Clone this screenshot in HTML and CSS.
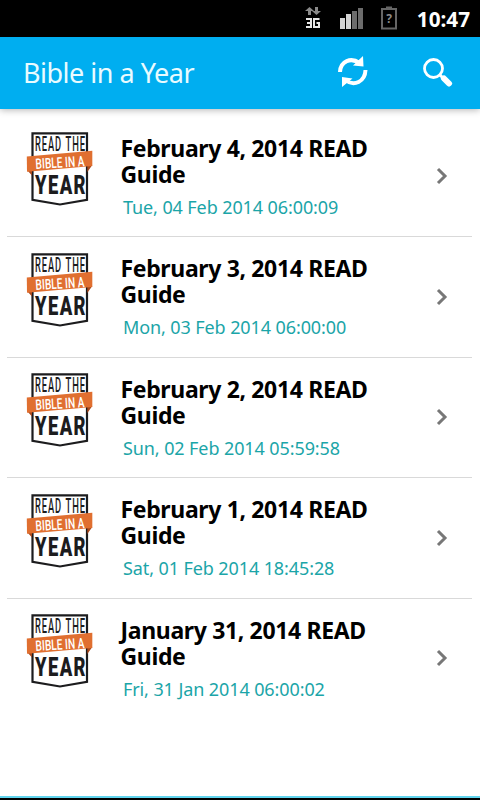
FILE: index.html
```html
<!DOCTYPE html>
<html lang="en">
  <head>
    <meta charset="utf-8">
    <meta name="viewport" content="width=device-width" />
    <title>Bible in a Year</title>
    <link rel="stylesheet" href="styles.css">
  </head>
  <body>
    <svg class="defs" width="0" height="0">
      <symbol id="badge" viewBox="0 0 68 76">
        <path d="M6.500 2.300H61v66.500L34 73.500 6.500 68.800z" fill="#fff" stroke="#1c1c1e" stroke-width="2.200"/>
        <path d="M1 39l5 5.500V39zM66.300 34l-5 7v-7z" fill="#a8481c"/>
        <path d="M.800 25.500L66.300 19.800V35L1 40.700z" fill="#e06f30"/>
        <g font-family="Roboto, sans-serif" fill="#1c1c1e">
          <text class="spaced" x="9" y="20" font-size="20.500" font-weight="500" textLength="27" lengthAdjust="spacingAndGlyphs">READ</text>
          <text class="spaced" x="39.500" y="20" font-size="20.500" font-weight="500" textLength="20.500" lengthAdjust="spacingAndGlyphs">THE</text>
          <text x="9.500" y="36.500" font-size="14.500" font-weight="500" fill="#fff" textLength="49" lengthAdjust="spacingAndGlyphs" transform="rotate(-3.500 34 32)">BIBLE IN A</text>
          <text class="spaced" x="9" y="63" font-size="26" font-weight="900" textLength="52" lengthAdjust="spacingAndGlyphs">YEAR</text>
        </g>
      </symbol>
      <symbol id="chevron" viewBox="0 0 12 18">
        <path d="M2 2l7 7-7 7" fill="none" stroke="#777" stroke-width="3"/>
      </symbol>
    </svg>

    <div class="status-bar">
      <svg class="network" width="16" height="22" viewBox="0 0 16 22">
        <path d="M4.500 0L0 4h3v4h3V4h3zM11.500 8L7 4h3V0h3v4h3z" fill="#8a8a8a"/>
        <path d="M1 12h5v8H1M2 16h4M14.500 12H9v8h5v-4h-2.500" fill="none" stroke="#e8e8e8" stroke-width="2"/>
      </svg>
      <svg class="signal" width="24" height="22" viewBox="0 0 24 22">
        <path d="M0 10h5v11H0zM6 6h5v15H6z" fill="#d4d4d4"/>
        <path d="M12 3h5v18h-5zM18 0h5v21h-5z" fill="#6c6c6c"/>
      </svg>
      <svg class="battery" width="16" height="24" viewBox="0 0 16 24">
        <path d="M1 3h14v19.500H1zM5 1.500h6" fill="none" stroke="#666" stroke-width="2"/>
        <text x="8" y="17" text-anchor="middle" font-size="12" font-weight="700" fill="#8a8a8a">?</text>
      </svg>
      <span class="clock">10:47</span>
    </div>

    <header class="header">
      <h1>Bible in a Year</h1>
      <svg class="refresh" width="30" height="32" viewBox="0 0 30 32">
        <path d="M2 16C2.500 5 13 1 21.500 7M27.500 14C27 26 16 30.500 8 24.500" fill="none" stroke="#fff" stroke-width="4"/>
        <path d="M25 0l.500 10.500L15 9.500zM4 31l0-10 10.500 1.500z" fill="#fff"/>
      </svg>
      <svg class="search" width="30" height="30" viewBox="0 0 30 30">
        <circle cx="10.500" cy="10.500" r="9" fill="none" stroke="#fff" stroke-width="2.800"/>
        <path d="M17 17l3 3" stroke="#fff" stroke-width="3"/>
        <path d="M21 20.500l5 5" stroke="#fff" stroke-width="6" stroke-linecap="round"/>
      </svg>
    </header>

    <main class="guides">
      <a class="guide">
        <svg class="badge"><use href="#badge"/></svg>
        <div class="text">
          <h2>February 4, 2014 READ<br>Guide</h2>
          <p>Tue, 04 Feb 2014 06:00:09</p>
        </div>
        <svg class="chevron"><use href="#chevron"/></svg>
      </a>
      <a class="guide">
        <svg class="badge"><use href="#badge"/></svg>
        <div class="text">
          <h2>February 3, 2014 READ<br>Guide</h2>
          <p>Mon, 03 Feb 2014 06:00:00</p>
        </div>
        <svg class="chevron"><use href="#chevron"/></svg>
      </a>
      <a class="guide">
        <svg class="badge"><use href="#badge"/></svg>
        <div class="text">
          <h2>February 2, 2014 READ<br>Guide</h2>
          <p>Sun, 02 Feb 2014 05:59:58</p>
        </div>
        <svg class="chevron"><use href="#chevron"/></svg>
      </a>
      <a class="guide">
        <svg class="badge"><use href="#badge"/></svg>
        <div class="text">
          <h2>February 1, 2014 READ<br>Guide</h2>
          <p>Sat, 01 Feb 2014 18:45:28</p>
        </div>
        <svg class="chevron"><use href="#chevron"/></svg>
      </a>
      <a class="guide">
        <svg class="badge"><use href="#badge"/></svg>
        <div class="text">
          <h2>January 31, 2014 READ<br>Guide</h2>
          <p>Fri, 31 Jan 2014 06:00:02</p>
        </div>
        <svg class="chevron"><use href="#chevron"/></svg>
      </a>
    </main>
    <footer class="bottom-edge"></footer>
  </body>
</html>
```
FILE: styles.css
```css
body {
  margin: 0;
  height: 800px;
  display: flex;
  flex-direction: column;
  overflow: hidden;
  background: #fff;
  font-family: "Noto Sans", "Open Sans", sans-serif;
}

h1,
h2,
p {
  margin: 0;
}

.defs {
  position: absolute;
}

.spaced {
  letter-spacing: 2px;
}

.status-bar {
  display: flex;
  align-items: center;
  justify-content: flex-end;
  height: 37px;
  padding-right: 10px;
  background: #000;
}

.network {
  margin: 0 19px 2px 0;
}

.signal {
  margin-right: 17px;
}

.battery {
  margin: 0 20px 2px 0;
}

.clock {
  color: #fff;
  font-size: 20.7px;
  font-weight: 700;
}

.header {
  display: flex;
  align-items: center;
  height: 72px;
  padding: 0 27px 0 23px;
  background: #00aef0;
  box-shadow: 0 1px 7px rgb(0 0 0 / .3);
}

.header h1 {
  flex-grow: 1;
  padding-bottom: 1px;
  color: #e9fbff;
  font-size: 27px;
  font-weight: 400;
  letter-spacing: -.5px;
}

.refresh {
  margin: 0 55px 2px 0;
}

.guides {
  flex-grow: 1;
  padding: 7.5px 8px 0 7px;
}

.guide {
  display: flex;
  box-sizing: border-box;
  height: 120.5px;
  padding: 14.5px 24px 0 19px;
  border-bottom: 1px solid #d9d9d9;
}

.guide:last-child {
  border-bottom: none;
}

.badge {
  width: 68px;
  height: 76px;
}

.text {
  flex-grow: 1;
  padding: 3.5px 0 0 26.5px;
}

.text h2 {
  color: #000;
  font-size: 23px;
  line-height: 26px;
  letter-spacing: -.35px;
  white-space: nowrap;
}

.text p {
  padding: 8px 0 0 2.5px;
  color: #1ba5a8;
  font-size: 18px;
  line-height: 24px;
  letter-spacing: -.1px;
  white-space: nowrap;
}

.chevron {
  width: 12px;
  height: 18px;
  margin-top: 36px;
}

.bottom-edge {
  height: 2px;
  background: #62d5ee;
  border-bottom: 2px solid #000;
}
```
